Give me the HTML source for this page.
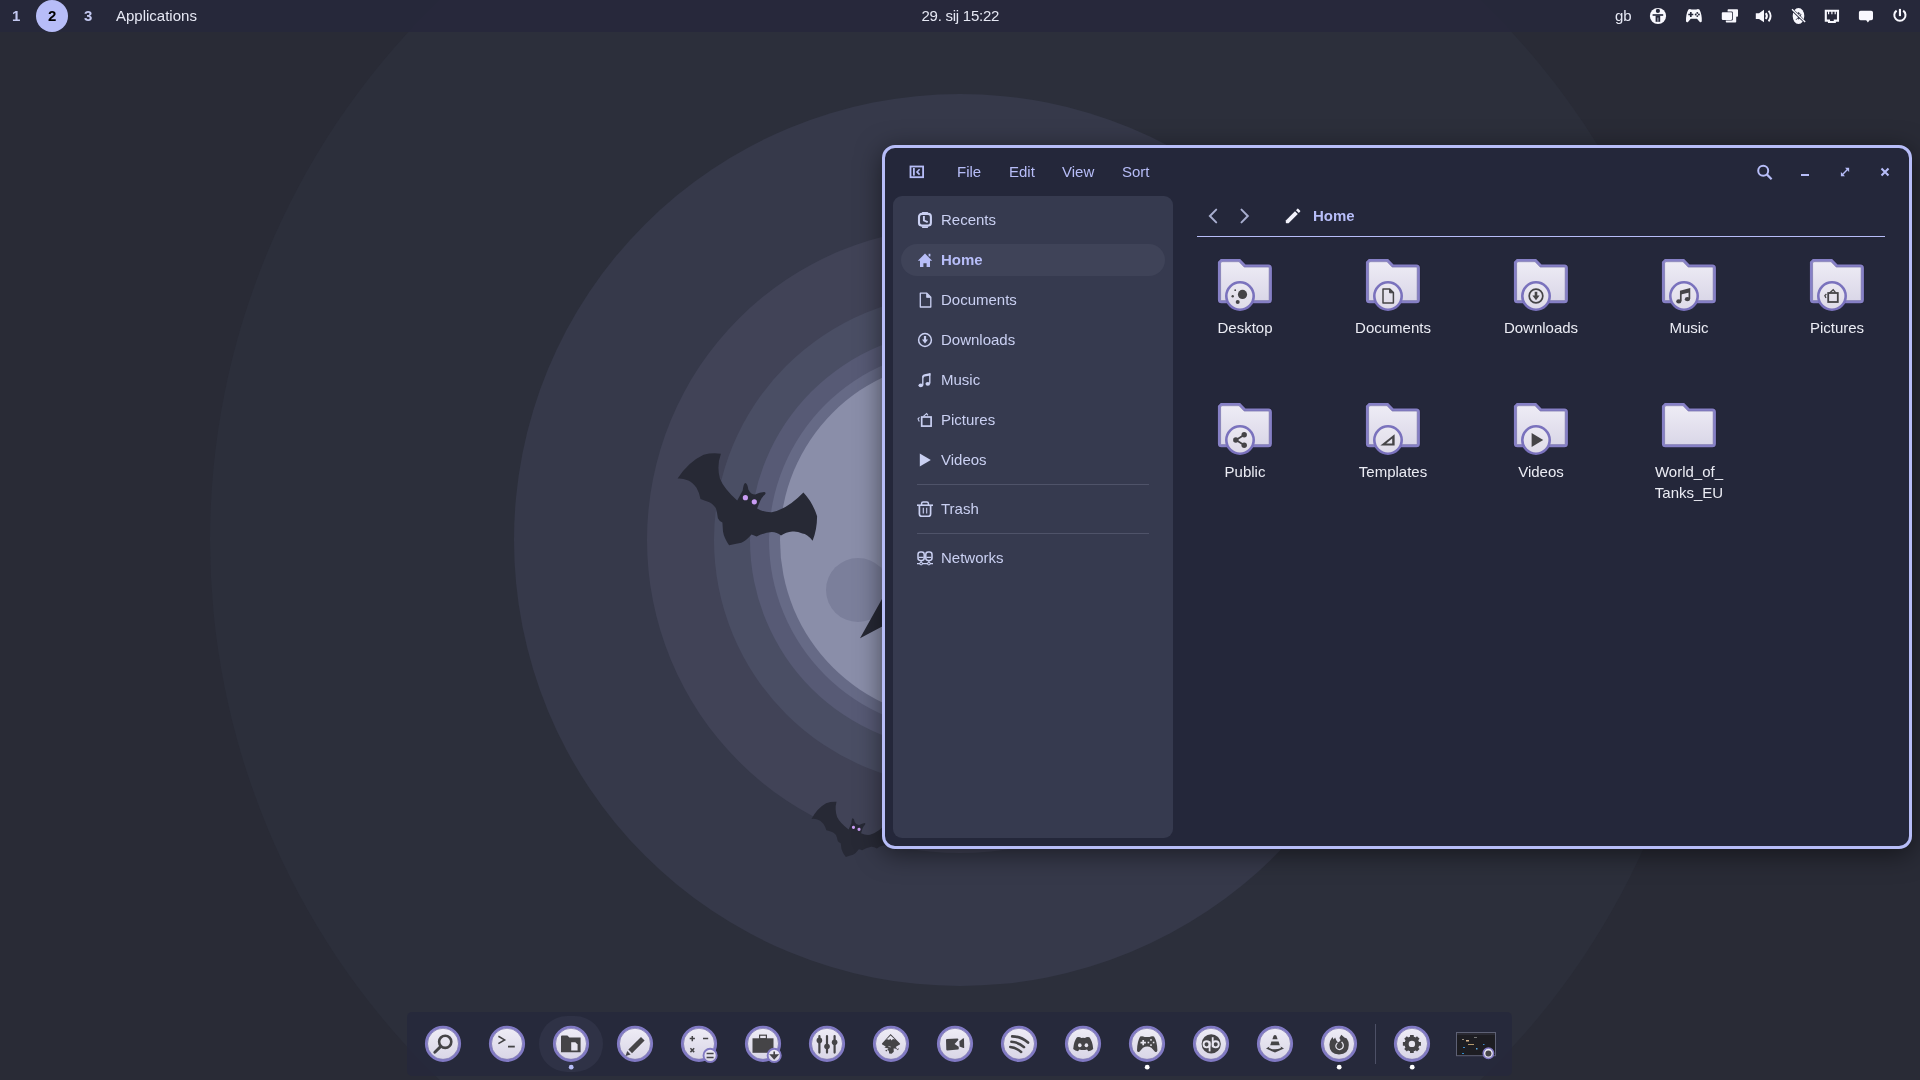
<!DOCTYPE html>
<html><head><meta charset="utf-8">
<style>
*{margin:0;padding:0;box-sizing:border-box}
html,body{width:1920px;height:1080px;overflow:hidden;background:#292b36;font-family:"Liberation Sans",sans-serif}
#root{position:absolute;left:0;top:0;width:1920px;height:1080px;will-change:transform}
.abs{position:absolute}
#wall{position:absolute;left:0;top:0}
#bar{position:absolute;left:0;top:0;width:1920px;height:32px;background:rgba(38,40,59,0.86);color:#e6e8f4;font-size:15px}
#bar .t{position:absolute;top:0;line-height:32px;white-space:nowrap}
#win{position:absolute;left:882px;top:145px;width:1030px;height:704px;border:3px solid #b7bdf8;border-radius:13px;background:#24273a;box-shadow:0 5px 26px rgba(0,0,0,0.5)}
.menu{position:absolute;top:161px;line-height:22px;font-size:15px;color:#b7bdf8}
#side{position:absolute;left:893px;top:196px;width:280px;height:642px;background:#363a4f;border-radius:9px}
.si{position:absolute;left:941px;font-size:15px;color:#cad0f2;line-height:20px;white-space:nowrap}
.sic{position:absolute;left:917px;width:16px;height:16px}
.sep{position:absolute;left:917px;width:232px;height:1px;background:#4f5369}
.lbl{position:absolute;width:148px;text-align:center;font-size:15px;color:#ebecf4;line-height:21px}
.fold{position:absolute;width:54px;height:56px}
#dock{position:absolute;left:407px;top:1012px;width:1105px;height:64px;background:rgba(37,40,60,0.8);border-radius:5px}
.di{position:absolute;top:1025px;width:38px;height:38px}
.dot{position:absolute;top:1065px;width:5px;height:5px;border-radius:50%}
</style></head>
<body><div id="root">
<svg id="wall" width="1920" height="1080" viewBox="0 0 1920 1080">
  <rect width="1920" height="1080" fill="#292b36"/>
  <circle cx="960" cy="540" r="750" fill="#2c2f3b"/>
  <circle cx="960" cy="540" r="446" fill="#36394a"/>
  <circle cx="960" cy="540" r="313" fill="#414357"/>
  <circle cx="960" cy="540" r="246" fill="#4a4e64"/>
  <circle cx="960" cy="540" r="210" fill="#575a75"/>
  <circle cx="960" cy="540" r="191" fill="#666a86"/>
  <circle cx="960" cy="540" r="180" fill="#8a8ea9"/>
  <circle cx="858" cy="590" r="32" fill="#7b7f9b"/>
  <path d="M860,638.3 L881.7,599.4 L890,590 L890,630 L881.7,626.7 Z" fill="#262834"/>
  <g id="bat1">
  <path fill="#272935" d="M677.6,478.6 Q688,462 703.6,454.7 Q712,452.5 720.9,453.7 Q716.5,466 719.9,478.6 Q724,489 737.2,500.5 L742.6,490.8 Q743.6,482.6 745.5,482.9 Q747.6,483.6 748.3,489.4 Q751,494.6 755.2,494.6 Q760,492.2 764.4,492 Q766.4,492.4 765,494.6 Q761.6,497.6 760.4,500.4 L757.1,508.6 Q764,512.5 771.8,512.2 Q787.1,509.2 803.4,492.4 Q812.6,502 817.1,516.3 Q817,530 812.6,540.7 Q807,534 802.4,533.6 Q797,531 792.2,531.6 Q786,532 781,535.6 Q777,532 771.8,532 Q763,533 756.6,536.6 Q753,535 751.5,534.6 Q746,541 741.3,542.8 Q735,544 729.1,545.3 Q724,538 723,531.6 L722.4,522.4 Q719,521 717.9,518.3 Q717,512 715.8,508.1 Q712,503 708.7,502 Q703,500 700.5,499 Q699,492 696.5,487.8 Q692,482 688.3,480.6 Q682,478 677.6,478.6 Z"/>
  <circle cx="745.4" cy="497.7" r="2.6" fill="#c99cf4"/>
  <circle cx="754.3" cy="501.8" r="2.6" fill="#c99cf4"/>
  </g>
  <use href="#bat1" transform="translate(811.5,819) rotate(-4.5) scale(0.607) translate(-677.6,-478.6)"/>
</svg>

<div id="bar">
  <div class="t" style="left:12px;font-weight:bold;color:#c3c8f0">1</div>
  <div class="abs" style="left:36px;top:0;width:32px;height:32px;border-radius:50%;background:#b7bdf8"></div>
  <div class="t" style="left:48px;font-weight:bold;color:#000">2</div>
  <div class="t" style="left:84px;font-weight:bold;color:#c3c8f0">3</div>
  <div class="t" style="left:116px">Applications</div>
  <div class="t" style="left:921.5px;letter-spacing:-0.25px">29. sij 15:22</div>
  <div class="t" style="left:1615px">gb</div>
  <svg class="abs" style="left:1640px;top:0" width="280" height="32" viewBox="1640 0 280 32"><circle cx="1658" cy="16" r="8.1" fill="#f8f8fe"/><circle cx="1657.9" cy="10.9" r="2.1" fill="#24273a"/><rect x="1652.6" y="14.2" width="10.6" height="1.6" fill="#24273a"/><rect x="1655.6" y="15.6" width="4.6" height="6.2" fill="#24273a"/><rect x="1657.3" y="17.6" width="1.2" height="4.2" fill="#9a9cab"/><path d="M1688.4,9.4 Q1690,8.6 1691.6,9.6 H1696.2 Q1697.8,8.6 1699.4,9.4 Q1702,14 1701.8,21.2 Q1701.4,22.6 1700,22.2 L1697,18.8 H1690.8 L1687.8,22.2 Q1686.4,22.6 1686,21.2 Q1685.8,14 1688.4,9.4 Z" fill="#f8f8fe"/><path d="M1690.8,12 V17 M1688.3,14.5 H1693.3" stroke="#24273a" stroke-width="1.7"/><circle cx="1697.3" cy="12.9" r="0.95" fill="#24273a"/><circle cx="1697.3" cy="16.1" r="0.95" fill="#24273a"/><circle cx="1695.7" cy="14.5" r="0.95" fill="#24273a"/><circle cx="1698.9" cy="14.5" r="0.95" fill="#24273a"/><rect x="1727.6" y="9.2" width="10.4" height="7.6" rx="0.8" fill="#f8f8fe"/><rect x="1725.8" y="16" width="10.4" height="6.6" rx="0.8" fill="#f8f8fe"/><rect x="1721" y="11.6" width="11.8" height="9" rx="1" fill="#24273a"/><rect x="1721.8" y="12.3" width="10.2" height="7.6" rx="0.8" fill="#f8f8fe"/><path d="M1755.8,13.2 H1759 L1764,9.7 V22.2 L1759,19 H1755.8 Z" fill="#f8f8fe"/><path d="M1765.8,13.2 Q1768,16.1 1765.8,19" fill="none" stroke="#f8f8fe" stroke-width="2"/><path d="M1768.6,10.8 Q1772.6,16.1 1768.6,21.4" fill="none" stroke="#f8f8fe" stroke-width="1.9"/><ellipse cx="1798.5" cy="16" rx="5.8" ry="8" fill="#f8f8fe"/><path d="M1796,11.8 L1801,16.8 L1798.6,19.2 V12.4 L1801,14.8 L1796,19.8" fill="none" stroke="#24273a" stroke-width="0.9"/><path d="M1791.6,9.2 L1805.6,22.6" stroke="#24273a" stroke-width="2.6"/><path d="M1792,9.2 L1805.2,22" stroke="#f8f8fe" stroke-width="1.3"/><path d="M1825.8,10.8 H1838 V20.6 H1834.8 V22 H1829 V20.6 H1825.8 Z" fill="none" stroke="#f8f8fe" stroke-width="2.1"/><path d="M1828.6,11 V14.2 M1831.9,11 V14.2 M1835.2,11 V14.2" stroke="#f8f8fe" stroke-width="1.2"/><path d="M1860.6,10.7 H1871.2 Q1873,10.7 1873,12.5 V18.4 Q1873,20.2 1871.2,20.2 H1869.6 L1867.9,22.6 L1866.2,20.2 H1860.6 Q1858.9,20.2 1858.9,18.4 V12.5 Q1858.9,10.7 1860.6,10.7 Z" fill="#f8f8fe"/><path d="M1896.6,10.6 A5.6,5.6 0 1 0 1903.2,10.6" fill="none" stroke="#f8f8fe" stroke-width="2"/><rect x="1898.9" y="8.9" width="2.1" height="7.2" fill="#f8f8fe"/></svg>
</div>

<div id="win"></div>
<div class="menu" style="left:957px">File</div>
<div class="menu" style="left:1009px">Edit</div>
<div class="menu" style="left:1062px">View</div>
<div class="menu" style="left:1122px">Sort</div>

<div id="side"></div>
<div class="abs" style="left:901px;top:244px;width:264px;height:32px;border-radius:16px;background:#3f4358"></div>
<div class="si" style="top:210px">Recents</div>
<div class="si" style="top:250px;font-weight:bold;color:#b7bdf8">Home</div>
<div class="si" style="top:290px">Documents</div>
<div class="si" style="top:330px">Downloads</div>
<div class="si" style="top:370px">Music</div>
<div class="si" style="top:410px">Pictures</div>
<div class="si" style="top:450px">Videos</div>
<div class="sep" style="top:484px"></div>
<div class="si" style="top:499px">Trash</div>
<div class="sep" style="top:533px"></div>
<div class="si" style="top:548px">Networks</div>

<svg class="abs" style="left:909px;top:165px" width="16" height="14" viewBox="0 0 16 14"><rect x="1.5" y="1.5" width="12.6" height="10.7" fill="none" stroke="#b7bdf8" stroke-width="1.8"/><rect x="4" y="3" width="1.8" height="7.6" fill="#b7bdf8"/><path d="M10.6,4.2 L8,6.9 L10.6,9.6" fill="none" stroke="#b7bdf8" stroke-width="1.6"/></svg>

<svg class="sic" style="top:212px" viewBox="0 0 16 16"><rect x="2" y="1.9" width="11.9" height="11.7" rx="2.8" fill="none" stroke="#cad0f2" stroke-width="2.1"/><rect x="5.1" y="0" width="5.8" height="1.6" fill="#cad0f2"/><rect x="5.1" y="14.4" width="5.8" height="1.6" fill="#cad0f2"/><path d="M6.9,4.1 V8.5 L10.7,10.2" fill="none" stroke="#cad0f2" stroke-width="1.9"/></svg>
<svg class="sic" style="top:252px" viewBox="0 0 16 16"><path d="M8,1.6 L15.2,8.7 H13 V15 H9.6 V11.2 H6.4 V15 H3 V8.7 H0.8 Z" fill="#b7bdf8"/><rect x="11.6" y="1.8" width="1.8" height="2.6" fill="#b7bdf8"/></svg>
<svg class="sic" style="top:292px" viewBox="0 0 16 16"><path d="M3.3,1.2 H9.8 L13.8,5.2 V15 H3.3 Z" fill="none" stroke="#cad0f2" stroke-width="1.3" stroke-linejoin="round"/><path d="M9.6,1.2 V5.4 H13.8" fill="#cad0f2" stroke="#cad0f2" stroke-width="0.8"/></svg>
<svg class="sic" style="top:332px" viewBox="0 0 16 16"><circle cx="8" cy="8" r="6.4" fill="none" stroke="#cad0f2" stroke-width="1.5"/><path d="M6.9,4 H9.1 V7.6 H11 L8,11.4 L5,7.6 H6.9 Z" fill="#cad0f2"/></svg>
<svg class="sic" style="top:372px" viewBox="0 0 16 16"><path d="M5.8,13 V4.2 M12.8,11.6 V1.4" stroke="#cad0f2" stroke-width="1.35"/><path d="M5.1,4.6 Q5.4,2.7 7.6,2.2 L13.45,0.9 V3.4 L7.8,4.6 Q6.4,4.9 6.45,6.4 Z" fill="#cad0f2"/><ellipse cx="3.8" cy="13.3" rx="2.3" ry="1.85" fill="#cad0f2"/><ellipse cx="10.8" cy="11.8" rx="2.3" ry="1.85" fill="#cad0f2"/></svg>
<svg class="sic" style="top:412px" viewBox="0 0 16 16"><rect x="4.7" y="5" width="9.4" height="9.1" fill="none" stroke="#cad0f2" stroke-width="1.7"/><path d="M6.4,4.4 L9.6,1.5 L10.9,3.4" fill="none" stroke="#cad0f2" stroke-width="1.15"/><path d="M2.5,5.3 L1,6.9 L2.3,9.4" fill="none" stroke="#cad0f2" stroke-width="1.1"/></svg>
<svg class="sic" style="top:452px" viewBox="0 0 16 16"><path d="M2.8,1.6 L13.8,8 L2.8,14.6 Z" fill="#cad0f2"/></svg>
<svg class="sic" style="top:501px" viewBox="0 0 16 16"><path d="M0,4.2 H16" stroke="#cad0f2" stroke-width="1.6"/><path d="M4.6,4 V2.6 Q4.6,1 6.2,1 H9.8 Q11.4,1 11.4,2.6 V4" fill="none" stroke="#cad0f2" stroke-width="1.5"/><path d="M2.4,4.6 V13 Q2.4,15.3 4.6,15.3 H11.4 Q13.6,15.3 13.6,13 V4.6" fill="none" stroke="#cad0f2" stroke-width="1.7"/><path d="M6.3,6.8 V12.4 M9.7,6.8 V12.4" stroke="#cad0f2" stroke-width="1.1"/></svg>
<svg class="sic" style="top:551px" viewBox="0 0 16 16"><rect x="1" y="1" width="6.2" height="8.4" rx="2.4" fill="none" stroke="#cad0f2" stroke-width="1.5"/><rect x="8.8" y="1" width="6.2" height="8.4" rx="2.4" fill="none" stroke="#cad0f2" stroke-width="1.5"/><path d="M1.6,6.4 H6.6 M9.4,6.4 H14.4" stroke="#cad0f2" stroke-width="1.1"/><path d="M4.1,9.4 V11.2 M11.9,9.4 V11.2 M0,12.6 H16" stroke="#cad0f2" stroke-width="1.3"/><circle cx="4.1" cy="12.6" r="1.8" fill="#cad0f2"/><circle cx="11.9" cy="12.6" r="1.8" fill="#cad0f2"/><circle cx="4.1" cy="12.6" r="0.8" fill="#363a4f"/><circle cx="11.9" cy="12.6" r="0.8" fill="#363a4f"/></svg>

<svg class="abs" style="left:1203px;top:207px" width="18" height="18" viewBox="0 0 18 18"><path d="M13.2,2.6 L6.9,9 L13.2,15.4" fill="none" stroke="#a8aecf" stroke-width="2" stroke-linecap="round"/></svg>
<svg class="abs" style="left:1236px;top:207px" width="18" height="18" viewBox="0 0 18 18"><path d="M5.5,2.6 L11.8,9 L5.5,15.4" fill="none" stroke="#a8aecf" stroke-width="2" stroke-linecap="round"/></svg>
<svg class="abs" style="left:1285px;top:208px" width="16" height="16" viewBox="0 0 16 16"><path d="M0.8,12.4 L10,3.2 L12.8,6 L3.6,15.2 H1.4 Q0.8,15.2 0.8,14.6 Z" fill="#f2f2fb"/><path d="M11,2.2 L12.4,0.8 Q12.8,0.4 13.2,0.8 L15.2,2.8 Q15.6,3.2 15.2,3.6 L13.8,5 Z" fill="#f2f2fb"/></svg>

<svg class="abs" style="left:1755px;top:163px" width="18" height="18" viewBox="0 0 18 18"><circle cx="8.2" cy="7.8" r="5" fill="none" stroke="#b7bdf8" stroke-width="2"/><path d="M11.8,11.4 L16.6,16.2" stroke="#b7bdf8" stroke-width="2.2"/></svg>
<div class="abs" style="left:1801px;top:173.5px;width:8px;height:2.5px;background:#b7bdf8"></div>
<svg class="abs" style="left:1838px;top:165px" width="14" height="14" viewBox="0 0 14 14"><path d="M4.6,9.4 L9.4,4.6" stroke="#b7bdf8" stroke-width="1.35"/><path d="M7,2.8 H11.1 V6.9 Z" fill="#b7bdf8"/><path d="M2.9,7.1 V11.2 H7 Z" fill="#b7bdf8"/></svg>
<svg class="abs" style="left:1878px;top:165px" width="14" height="14" viewBox="0 0 14 14"><path d="M3.5,3.5 L10.5,10.5 M10.5,3.5 L3.5,10.5" stroke="#b7bdf8" stroke-width="2.1"/></svg>


<div class="abs" style="left:1197px;top:236px;width:688px;height:1px;background:#b7bdf8"></div>
<div class="abs" style="left:1313px;top:205px;font-size:15px;font-weight:bold;color:#b7bdf8;line-height:22px">Home</div>

<svg width="0" height="0" style="position:absolute"><defs><linearGradient id="fg" x1="0" y1="0" x2="0" y2="1"><stop offset="0" stop-color="#efedf6"/><stop offset="1" stop-color="#d9d6e7"/></linearGradient><linearGradient id="bg" x1="0" y1="0" x2="0" y2="1"><stop offset="0" stop-color="#ebe9f2"/><stop offset="1" stop-color="#dedbe8"/></linearGradient></defs></svg><svg class="abs" style="left:1217px;top:259px" width="56" height="56" viewBox="0 0 56 56"><path d="M2.2,3.4 L4.3,1.3 H22.6 L27.8,6.7 H51.4 Q53.6,6.7 53.6,8.9 V40.8 Q53.6,43 51.4,43 H4.4 Q2.2,43 2.2,40.8 Z" fill="url(#fg)" stroke="#1f1e32" stroke-width="4" stroke-opacity="0.35"/><path d="M2.2,3.4 L4.3,1.3 H22.6 L27.8,6.7 H51.4 Q53.6,6.7 53.6,8.9 V40.8 Q53.6,43 51.4,43 H4.4 Q2.2,43 2.2,40.8 Z" fill="url(#fg)" stroke="#8680c6" stroke-width="2.6"/><path d="M3.6,4 L4.9,2.7 H22 L27.2,8.1 H51.3 Q52.2,8.1 52.2,9 V40.7 Q52.2,41.6 51.3,41.6 H4.5 Q3.6,41.6 3.6,40.7 Z" fill="none" stroke="#655e9e" stroke-width="0.7" stroke-opacity="0.8"/><circle cx="23" cy="37" r="13.7" fill="url(#bg)" stroke="#7a72bd" stroke-width="2.6"/><g transform="translate(23,37)"><circle cx="2.5" cy="-1.6" r="4.6" fill="#454447"/><circle cx="-2.3" cy="5.9" r="2" fill="#454447"/><circle cx="-7.3" cy="0.3" r="1.2" fill="#454447"/><circle cx="-4.8" cy="-5.8" r="0.9" fill="#454447"/></g></svg>
<svg class="abs" style="left:1365px;top:259px" width="56" height="56" viewBox="0 0 56 56"><path d="M2.2,3.4 L4.3,1.3 H22.6 L27.8,6.7 H51.4 Q53.6,6.7 53.6,8.9 V40.8 Q53.6,43 51.4,43 H4.4 Q2.2,43 2.2,40.8 Z" fill="url(#fg)" stroke="#1f1e32" stroke-width="4" stroke-opacity="0.35"/><path d="M2.2,3.4 L4.3,1.3 H22.6 L27.8,6.7 H51.4 Q53.6,6.7 53.6,8.9 V40.8 Q53.6,43 51.4,43 H4.4 Q2.2,43 2.2,40.8 Z" fill="url(#fg)" stroke="#8680c6" stroke-width="2.6"/><path d="M3.6,4 L4.9,2.7 H22 L27.2,8.1 H51.3 Q52.2,8.1 52.2,9 V40.7 Q52.2,41.6 51.3,41.6 H4.5 Q3.6,41.6 3.6,40.7 Z" fill="none" stroke="#655e9e" stroke-width="0.7" stroke-opacity="0.8"/><circle cx="23" cy="37" r="13.7" fill="url(#bg)" stroke="#7a72bd" stroke-width="2.6"/><g transform="translate(23,37)"><path d="M-5,-7 H1.8 L5.4,-3.4 V7 H-5 Z" fill="none" stroke="#454447" stroke-width="1.5" stroke-linejoin="round"/><path d="M1.6,-7 V-3.2 H5.4" fill="#454447" stroke="#454447" stroke-width="1"/></g></svg>
<svg class="abs" style="left:1513px;top:259px" width="56" height="56" viewBox="0 0 56 56"><path d="M2.2,3.4 L4.3,1.3 H22.6 L27.8,6.7 H51.4 Q53.6,6.7 53.6,8.9 V40.8 Q53.6,43 51.4,43 H4.4 Q2.2,43 2.2,40.8 Z" fill="url(#fg)" stroke="#1f1e32" stroke-width="4" stroke-opacity="0.35"/><path d="M2.2,3.4 L4.3,1.3 H22.6 L27.8,6.7 H51.4 Q53.6,6.7 53.6,8.9 V40.8 Q53.6,43 51.4,43 H4.4 Q2.2,43 2.2,40.8 Z" fill="url(#fg)" stroke="#8680c6" stroke-width="2.6"/><path d="M3.6,4 L4.9,2.7 H22 L27.2,8.1 H51.3 Q52.2,8.1 52.2,9 V40.7 Q52.2,41.6 51.3,41.6 H4.5 Q3.6,41.6 3.6,40.7 Z" fill="none" stroke="#655e9e" stroke-width="0.7" stroke-opacity="0.8"/><circle cx="23" cy="37" r="13.7" fill="url(#bg)" stroke="#7a72bd" stroke-width="2.6"/><g transform="translate(23,37)"><circle cx="0" cy="0" r="6.8" fill="none" stroke="#454447" stroke-width="1.7"/><path d="M-1.3,-4.2 H1.3 V-0.4 H3.6 L0,4.2 L-3.6,-0.4 H-1.3 Z" fill="#454447"/></g></svg>
<svg class="abs" style="left:1661px;top:259px" width="56" height="56" viewBox="0 0 56 56"><path d="M2.2,3.4 L4.3,1.3 H22.6 L27.8,6.7 H51.4 Q53.6,6.7 53.6,8.9 V40.8 Q53.6,43 51.4,43 H4.4 Q2.2,43 2.2,40.8 Z" fill="url(#fg)" stroke="#1f1e32" stroke-width="4" stroke-opacity="0.35"/><path d="M2.2,3.4 L4.3,1.3 H22.6 L27.8,6.7 H51.4 Q53.6,6.7 53.6,8.9 V40.8 Q53.6,43 51.4,43 H4.4 Q2.2,43 2.2,40.8 Z" fill="url(#fg)" stroke="#8680c6" stroke-width="2.6"/><path d="M3.6,4 L4.9,2.7 H22 L27.2,8.1 H51.3 Q52.2,8.1 52.2,9 V40.7 Q52.2,41.6 51.3,41.6 H4.5 Q3.6,41.6 3.6,40.7 Z" fill="none" stroke="#655e9e" stroke-width="0.7" stroke-opacity="0.8"/><circle cx="23" cy="37" r="13.7" fill="url(#bg)" stroke="#7a72bd" stroke-width="2.6"/><g transform="translate(23,37)"><path d="M-3.2,5 V-4.6 L5.4,-6.8 V3" fill="none" stroke="#454447" stroke-width="1.7"/><path d="M-3.2,-4.6 L5.4,-6.8 V-3.6 L-3.2,-1.4 Z" fill="#454447"/><ellipse cx="-5.2" cy="5.4" rx="2.6" ry="2.1" fill="#454447"/><ellipse cx="3.4" cy="3.2" rx="2.6" ry="2.1" fill="#454447"/></g></svg>
<svg class="abs" style="left:1809px;top:259px" width="56" height="56" viewBox="0 0 56 56"><path d="M2.2,3.4 L4.3,1.3 H22.6 L27.8,6.7 H51.4 Q53.6,6.7 53.6,8.9 V40.8 Q53.6,43 51.4,43 H4.4 Q2.2,43 2.2,40.8 Z" fill="url(#fg)" stroke="#1f1e32" stroke-width="4" stroke-opacity="0.35"/><path d="M2.2,3.4 L4.3,1.3 H22.6 L27.8,6.7 H51.4 Q53.6,6.7 53.6,8.9 V40.8 Q53.6,43 51.4,43 H4.4 Q2.2,43 2.2,40.8 Z" fill="url(#fg)" stroke="#8680c6" stroke-width="2.6"/><path d="M3.6,4 L4.9,2.7 H22 L27.2,8.1 H51.3 Q52.2,8.1 52.2,9 V40.7 Q52.2,41.6 51.3,41.6 H4.5 Q3.6,41.6 3.6,40.7 Z" fill="none" stroke="#655e9e" stroke-width="0.7" stroke-opacity="0.8"/><circle cx="23" cy="37" r="13.7" fill="url(#bg)" stroke="#7a72bd" stroke-width="2.6"/><g transform="translate(23,37)"><rect x="-3.8" y="-3" width="9.6" height="9" fill="none" stroke="#454447" stroke-width="1.8"/><path d="M-2.4,-3 L1.2,-6.2 L3.6,-3.4" fill="none" stroke="#454447" stroke-width="1.3"/><path d="M-5.6,-2 L-7.2,-0.4 L-6,2" fill="none" stroke="#454447" stroke-width="1.2"/></g></svg>
<svg class="abs" style="left:1217px;top:403px" width="56" height="56" viewBox="0 0 56 56"><path d="M2.2,3.4 L4.3,1.3 H22.6 L27.8,6.7 H51.4 Q53.6,6.7 53.6,8.9 V40.8 Q53.6,43 51.4,43 H4.4 Q2.2,43 2.2,40.8 Z" fill="url(#fg)" stroke="#1f1e32" stroke-width="4" stroke-opacity="0.35"/><path d="M2.2,3.4 L4.3,1.3 H22.6 L27.8,6.7 H51.4 Q53.6,6.7 53.6,8.9 V40.8 Q53.6,43 51.4,43 H4.4 Q2.2,43 2.2,40.8 Z" fill="url(#fg)" stroke="#8680c6" stroke-width="2.6"/><path d="M3.6,4 L4.9,2.7 H22 L27.2,8.1 H51.3 Q52.2,8.1 52.2,9 V40.7 Q52.2,41.6 51.3,41.6 H4.5 Q3.6,41.6 3.6,40.7 Z" fill="none" stroke="#655e9e" stroke-width="0.7" stroke-opacity="0.8"/><circle cx="23" cy="37" r="13.7" fill="url(#bg)" stroke="#7a72bd" stroke-width="2.6"/><g transform="translate(23,37)"><path d="M4,-5 L-4,0 L4,5" fill="none" stroke="#454447" stroke-width="1.8"/><circle cx="4.2" cy="-5.2" r="2.7" fill="#454447"/><circle cx="-4.2" cy="0" r="2.7" fill="#454447"/><circle cx="4.2" cy="5.2" r="2.7" fill="#454447"/></g></svg>
<svg class="abs" style="left:1365px;top:403px" width="56" height="56" viewBox="0 0 56 56"><path d="M2.2,3.4 L4.3,1.3 H22.6 L27.8,6.7 H51.4 Q53.6,6.7 53.6,8.9 V40.8 Q53.6,43 51.4,43 H4.4 Q2.2,43 2.2,40.8 Z" fill="url(#fg)" stroke="#1f1e32" stroke-width="4" stroke-opacity="0.35"/><path d="M2.2,3.4 L4.3,1.3 H22.6 L27.8,6.7 H51.4 Q53.6,6.7 53.6,8.9 V40.8 Q53.6,43 51.4,43 H4.4 Q2.2,43 2.2,40.8 Z" fill="url(#fg)" stroke="#8680c6" stroke-width="2.6"/><path d="M3.6,4 L4.9,2.7 H22 L27.2,8.1 H51.3 Q52.2,8.1 52.2,9 V40.7 Q52.2,41.6 51.3,41.6 H4.5 Q3.6,41.6 3.6,40.7 Z" fill="none" stroke="#655e9e" stroke-width="0.7" stroke-opacity="0.8"/><circle cx="23" cy="37" r="13.7" fill="url(#bg)" stroke="#7a72bd" stroke-width="2.6"/><g transform="translate(23,37)"><path d="M-7.6,5.6 L6.6,-5.8 V5.6 Z" fill="#454447"/><path d="M-1.8,3.4 L4.2,-1.4 V3.4 Z" fill="#e6e4ee"/></g></svg>
<svg class="abs" style="left:1513px;top:403px" width="56" height="56" viewBox="0 0 56 56"><path d="M2.2,3.4 L4.3,1.3 H22.6 L27.8,6.7 H51.4 Q53.6,6.7 53.6,8.9 V40.8 Q53.6,43 51.4,43 H4.4 Q2.2,43 2.2,40.8 Z" fill="url(#fg)" stroke="#1f1e32" stroke-width="4" stroke-opacity="0.35"/><path d="M2.2,3.4 L4.3,1.3 H22.6 L27.8,6.7 H51.4 Q53.6,6.7 53.6,8.9 V40.8 Q53.6,43 51.4,43 H4.4 Q2.2,43 2.2,40.8 Z" fill="url(#fg)" stroke="#8680c6" stroke-width="2.6"/><path d="M3.6,4 L4.9,2.7 H22 L27.2,8.1 H51.3 Q52.2,8.1 52.2,9 V40.7 Q52.2,41.6 51.3,41.6 H4.5 Q3.6,41.6 3.6,40.7 Z" fill="none" stroke="#655e9e" stroke-width="0.7" stroke-opacity="0.8"/><circle cx="23" cy="37" r="13.7" fill="url(#bg)" stroke="#7a72bd" stroke-width="2.6"/><g transform="translate(23,37)"><path d="M-4.4,-7 L7.2,0 L-4.4,7 Z" fill="#454447"/></g></svg>
<svg class="abs" style="left:1661px;top:403px" width="56" height="56" viewBox="0 0 56 56"><path d="M2.2,3.4 L4.3,1.3 H22.6 L27.8,6.7 H51.4 Q53.6,6.7 53.6,8.9 V40.8 Q53.6,43 51.4,43 H4.4 Q2.2,43 2.2,40.8 Z" fill="url(#fg)" stroke="#1f1e32" stroke-width="4" stroke-opacity="0.35"/><path d="M2.2,3.4 L4.3,1.3 H22.6 L27.8,6.7 H51.4 Q53.6,6.7 53.6,8.9 V40.8 Q53.6,43 51.4,43 H4.4 Q2.2,43 2.2,40.8 Z" fill="url(#fg)" stroke="#8680c6" stroke-width="2.6"/><path d="M3.6,4 L4.9,2.7 H22 L27.2,8.1 H51.3 Q52.2,8.1 52.2,9 V40.7 Q52.2,41.6 51.3,41.6 H4.5 Q3.6,41.6 3.6,40.7 Z" fill="none" stroke="#655e9e" stroke-width="0.7" stroke-opacity="0.8"/></svg>
<div class="lbl" style="left:1171px;top:317px">Desktop</div>
<div class="lbl" style="left:1319px;top:317px">Documents</div>
<div class="lbl" style="left:1467px;top:317px">Downloads</div>
<div class="lbl" style="left:1615px;top:317px">Music</div>
<div class="lbl" style="left:1763px;top:317px">Pictures</div>
<div class="lbl" style="left:1171px;top:461px">Public</div>
<div class="lbl" style="left:1319px;top:461px">Templates</div>
<div class="lbl" style="left:1467px;top:461px">Videos</div>
<div class="lbl" style="left:1615px;top:461px">World_of_<br>Tanks_EU</div>

<div id="dock"></div>
<svg class="abs" style="left:407px;top:1012px" width="1105" height="64" viewBox="407 1012 1105 64"><defs><linearGradient id="dg" x1="0" y1="0" x2="0" y2="1"><stop offset="0" stop-color="#efedf6"/><stop offset="1" stop-color="#d8d5e6"/></linearGradient></defs><rect x="539" y="1016" width="64" height="56" rx="28" fill="#2f3246"/><circle cx="443" cy="1043.8" r="16.8" fill="url(#dg)" stroke="#8079c3" stroke-width="2.6"/><circle cx="443" cy="1043.8" r="15.5" fill="none" stroke="#6a63a6" stroke-width="0.7" stroke-opacity="0.85"/><circle cx="507" cy="1043.8" r="16.8" fill="url(#dg)" stroke="#8079c3" stroke-width="2.6"/><circle cx="507" cy="1043.8" r="15.5" fill="none" stroke="#6a63a6" stroke-width="0.7" stroke-opacity="0.85"/><circle cx="571" cy="1043.8" r="16.8" fill="url(#dg)" stroke="#8079c3" stroke-width="2.6"/><circle cx="571" cy="1043.8" r="15.5" fill="none" stroke="#6a63a6" stroke-width="0.7" stroke-opacity="0.85"/><circle cx="635" cy="1043.8" r="16.8" fill="url(#dg)" stroke="#8079c3" stroke-width="2.6"/><circle cx="635" cy="1043.8" r="15.5" fill="none" stroke="#6a63a6" stroke-width="0.7" stroke-opacity="0.85"/><circle cx="699" cy="1043.8" r="16.8" fill="url(#dg)" stroke="#8079c3" stroke-width="2.6"/><circle cx="699" cy="1043.8" r="15.5" fill="none" stroke="#6a63a6" stroke-width="0.7" stroke-opacity="0.85"/><circle cx="763" cy="1043.8" r="16.8" fill="url(#dg)" stroke="#8079c3" stroke-width="2.6"/><circle cx="763" cy="1043.8" r="15.5" fill="none" stroke="#6a63a6" stroke-width="0.7" stroke-opacity="0.85"/><circle cx="827" cy="1043.8" r="16.8" fill="url(#dg)" stroke="#8079c3" stroke-width="2.6"/><circle cx="827" cy="1043.8" r="15.5" fill="none" stroke="#6a63a6" stroke-width="0.7" stroke-opacity="0.85"/><circle cx="891" cy="1043.8" r="16.8" fill="url(#dg)" stroke="#8079c3" stroke-width="2.6"/><circle cx="891" cy="1043.8" r="15.5" fill="none" stroke="#6a63a6" stroke-width="0.7" stroke-opacity="0.85"/><circle cx="955" cy="1043.8" r="16.8" fill="url(#dg)" stroke="#8079c3" stroke-width="2.6"/><circle cx="955" cy="1043.8" r="15.5" fill="none" stroke="#6a63a6" stroke-width="0.7" stroke-opacity="0.85"/><circle cx="1019" cy="1043.8" r="16.8" fill="url(#dg)" stroke="#8079c3" stroke-width="2.6"/><circle cx="1019" cy="1043.8" r="15.5" fill="none" stroke="#6a63a6" stroke-width="0.7" stroke-opacity="0.85"/><circle cx="1083" cy="1043.8" r="16.8" fill="url(#dg)" stroke="#8079c3" stroke-width="2.6"/><circle cx="1083" cy="1043.8" r="15.5" fill="none" stroke="#6a63a6" stroke-width="0.7" stroke-opacity="0.85"/><circle cx="1147" cy="1043.8" r="16.8" fill="url(#dg)" stroke="#8079c3" stroke-width="2.6"/><circle cx="1147" cy="1043.8" r="15.5" fill="none" stroke="#6a63a6" stroke-width="0.7" stroke-opacity="0.85"/><circle cx="1211" cy="1043.8" r="16.8" fill="url(#dg)" stroke="#8079c3" stroke-width="2.6"/><circle cx="1211" cy="1043.8" r="15.5" fill="none" stroke="#6a63a6" stroke-width="0.7" stroke-opacity="0.85"/><circle cx="1275" cy="1043.8" r="16.8" fill="url(#dg)" stroke="#8079c3" stroke-width="2.6"/><circle cx="1275" cy="1043.8" r="15.5" fill="none" stroke="#6a63a6" stroke-width="0.7" stroke-opacity="0.85"/><circle cx="1339" cy="1043.8" r="16.8" fill="url(#dg)" stroke="#8079c3" stroke-width="2.6"/><circle cx="1339" cy="1043.8" r="15.5" fill="none" stroke="#6a63a6" stroke-width="0.7" stroke-opacity="0.85"/><circle cx="1412" cy="1043.8" r="16.8" fill="url(#dg)" stroke="#8079c3" stroke-width="2.6"/><circle cx="1412" cy="1043.8" r="15.5" fill="none" stroke="#6a63a6" stroke-width="0.7" stroke-opacity="0.85"/><circle cx="445.2" cy="1041.8" r="6.1" fill="none" stroke="#454447" stroke-width="2.6"/><path d="M440.8,1046.4 L434.8,1052.2" stroke="#454447" stroke-width="2.9" stroke-linecap="round"/><path d="M498.4,1036.2 L504.6,1039.9 L498.4,1043.6" fill="none" stroke="#454447" stroke-width="1.6"/><path d="M508,1046.6 H514.8" stroke="#454447" stroke-width="1.8"/><path d="M561,1036.6 Q561,1035.5 562,1035.5 H567.4 L569.4,1037.6 H580.6 V1052.2 H561 Z" fill="#454447"/><path d="M571.2,1042.2 H575.4 L577.6,1044.4 V1050.4 H571.2 Z" fill="#e8e6f0"/><path d="M628.4,1049.6 L641,1037 L644.6,1040.6 L632,1053.2 Z" fill="#454447"/><path d="M627.2,1051 L630.6,1054.4 L625.6,1056 Z" fill="#454447"/><path d="M692.3,1036 V1041.2 M689.7,1038.6 H694.9 M703,1038.6 H708.2 M690.4,1048.3 L694.2,1052.1 M694.2,1048.3 L690.4,1052.1" stroke="#454447" stroke-width="1.5"/><circle cx="710.1" cy="1055.4" r="6.6" fill="url(#dg)" stroke="#8179c2" stroke-width="1.9"/><path d="M706.6,1053.6 H713.6 M706.6,1057.4 H713.6" stroke="#454447" stroke-width="1.5"/><rect x="752.5" y="1038.3" width="21" height="14.5" fill="#454447"/><rect x="759.6" y="1035.2" width="6.8" height="3.6" fill="none" stroke="#454447" stroke-width="1.2"/><circle cx="774.2" cy="1055.4" r="6.6" fill="url(#dg)" stroke="#8179c2" stroke-width="1.9"/><path d="M774.2,1051.6 V1056 M771,1055 L774.2,1058.6 L777.4,1055 Z" stroke="#454447" stroke-width="1.6" fill="#454447"/><path d="M819.4,1036 V1052.6 M827,1036 V1052.6 M834.6,1036 V1052.6" stroke="#454447" stroke-width="2.2" stroke-linecap="round"/><circle cx="819.4" cy="1040.4" r="2.8" fill="#454447"/><circle cx="827" cy="1046.5" r="2.8" fill="#454447"/><circle cx="834.6" cy="1042.3" r="2.8" fill="#454447"/><path d="M890.6,1034.1 L900,1043.6 Q900.4,1044.2 899.8,1044.6 L895.6,1047 L897.2,1048.4 Q896.4,1049.2 895,1048.6 L893.6,1048.4 L893.8,1051.8 L891.6,1053.8 L889.2,1053.6 L888.8,1050.8 L887.2,1050 L888.4,1048.6 L884.4,1047.6 L885.8,1046.4 L882.2,1044.4 Q881.6,1043.8 882.2,1043.2 Z" fill="#454447"/><path d="M890.6,1035.5 L895,1039.5 L893,1039.1 L891.4,1040.5 L890.3,1038.7 L889,1040 L887.7,1039.3 L886.2,1039.8 Z" fill="#e8e6f0"/><circle cx="886.3" cy="1050.6" r="0.8" fill="#454447"/><path d="M896.8,1049.6 Q898.6,1050.2 898.4,1048.4" fill="none" stroke="#454447" stroke-width="0.8"/><path d="M888.4,1046.4 L890.8,1047" stroke="#e8e6f0" stroke-width="0.6"/><path d="M946,1040.2 Q946,1039.2 947,1039.1 L957.4,1038.4 Q958.2,1038.4 958.3,1039.2 L958.3,1040 L954.6,1044 L958.7,1046.8 L958.8,1048.6 Q958.8,1049.4 958,1049.5 L947.4,1050.6 Q946.4,1050.7 946.3,1049.8 Z" fill="#454447"/><path d="M959.4,1041.2 L963.2,1038.2 Q963.9,1038 964,1038.8 L964.2,1047.4 Q964.2,1048.2 963.4,1048 L959.6,1046.6 Z" fill="#454447"/><path d="M1012.2,1036.4 Q1021,1036.4 1028,1042.6" fill="none" stroke="#454447" stroke-width="2.7" stroke-linecap="round"/><path d="M1011.4,1041.8 Q1019,1042.2 1024,1047.2" fill="none" stroke="#454447" stroke-width="2.6" stroke-linecap="round"/><path d="M1010.2,1047 Q1016.6,1047.8 1021.2,1052" fill="none" stroke="#454447" stroke-width="2.4" stroke-linecap="round"/><path d="M1077,1037.2 Q1080,1036.6 1081.2,1038 Q1083,1037.6 1085,1038 Q1086.4,1036.6 1089.4,1037.2 Q1092.6,1041 1093.2,1049 Q1091.2,1050.8 1088.4,1051.2 L1087,1049.4 Q1083,1050.4 1079.4,1049.4 L1078,1051.2 Q1075.2,1050.8 1073.2,1049 Q1073.8,1041 1077,1037.2 Z" fill="#454447"/><ellipse cx="1079.8" cy="1045.2" rx="1.8" ry="2" fill="#e8e6f0"/><ellipse cx="1086.4" cy="1045.2" rx="1.8" ry="2" fill="#e8e6f0"/><path d="M1140.2,1036.6 Q1142.4,1035.6 1144.6,1037 H1149.6 Q1151.8,1035.6 1154,1036.6 Q1157.2,1041.4 1157.4,1050.4 Q1157,1052.6 1155,1051.8 L1151.4,1047.8 Q1147.2,1045 1143,1047.8 L1139.4,1051.8 Q1137.4,1052.6 1137,1050.4 Q1137.2,1041.4 1140.2,1036.6 Z" fill="#454447"/><path d="M1143.2,1039.9 V1045.3 M1140.5,1042.6 H1145.9" stroke="#e8e6f0" stroke-width="1.7"/><rect x="1150.2" y="1039.1" width="1.6" height="1.6" fill="#e8e6f0"/><rect x="1150.2" y="1044.3" width="1.6" height="1.6" fill="#e8e6f0"/><rect x="1147.6" y="1041.7" width="1.6" height="1.6" fill="#e8e6f0"/><rect x="1152.8" y="1041.7" width="1.6" height="1.6" fill="#e8e6f0"/><circle cx="1211.2" cy="1043.9" r="9.6" fill="#454447"/><circle cx="1206.6" cy="1044.3" r="3.05" fill="none" stroke="#e8e6f0" stroke-width="1.9"/><path d="M1209.6,1041.4 V1051.4" stroke="#e8e6f0" stroke-width="1.8"/><circle cx="1215.7" cy="1044.3" r="3.05" fill="none" stroke="#e8e6f0" stroke-width="1.9"/><path d="M1212.7,1037.2 V1047.2" stroke="#e8e6f0" stroke-width="1.8"/><path d="M1273.6,1035.8 Q1275,1034.4 1276.4,1035.8 L1277.6,1039.2 H1272.4 Z" fill="#454447"/><path d="M1271.4,1041.6 H1278.6 L1279.8,1045.2 H1270.2 Z" fill="#454447"/><path d="M1269.4,1046.4 L1266,1048.6 L1275,1052.6 L1284,1048.6 L1280.6,1046.4 L1281,1048 Q1275,1050.6 1269,1048 Z" fill="#454447"/><path d="M1332.4,1037 L1333.6,1039.4 L1335.1,1037.4 L1336.4,1040.6 Q1337.6,1041.4 1337.6,1042.6 L1339,1042 L1340.6,1040.2 L1339.4,1038 L1341.3,1034.7 L1344.4,1037.6 L1346.8,1038.6 Q1349,1041.8 1348.8,1045 Q1348.6,1054.4 1339,1054.4 Q1329.4,1054.2 1329.4,1044.8 Q1329.6,1040.6 1332.4,1037 Z" fill="#454447"/><path d="M1337.4,1042.8 Q1334.6,1045.8 1336.8,1048.4 Q1339.4,1050.6 1342,1048.6 Q1344.2,1046.4 1342.8,1043.6 L1341.6,1041.8" fill="none" stroke="#e8e6f0" stroke-width="1.2"/><path d="M1409.95,1037.59 L1410.07,1034.88 L1413.73,1034.88 L1413.85,1037.59 L1414.98,1038.06 L1416.98,1036.23 L1419.57,1038.82 L1417.74,1040.82 L1418.21,1041.95 L1420.92,1042.07 L1420.92,1045.73 L1418.21,1045.85 L1417.74,1046.98 L1419.57,1048.98 L1416.98,1051.57 L1414.98,1049.74 L1413.85,1050.21 L1413.73,1052.92 L1410.07,1052.92 L1409.95,1050.21 L1408.82,1049.74 L1406.82,1051.57 L1404.23,1048.98 L1406.06,1046.98 L1405.59,1045.85 L1402.88,1045.73 L1402.88,1042.07 L1405.59,1041.95 L1406.06,1040.82 L1404.23,1038.82 L1406.82,1036.23 L1408.82,1038.06 Z" fill="#454447"/><circle cx="1411.9" cy="1043.9" r="7.4" fill="#454447"/><circle cx="1411.9" cy="1043.9" r="3.2" fill="#e8e6f0"/><rect x="1375" y="1024" width="1" height="40" fill="#4d5066"/><rect x="1456.5" y="1032.5" width="39" height="23.2" fill="#1d1d22" stroke="#5e6175" stroke-width="1"/><rect x="1457" y="1033" width="38" height="2" fill="#2a2a33"/><rect x="1462" y="1039" width="2" height="1" fill="#9a8f7f"/><rect x="1466" y="1040" width="3" height="1.5" fill="#d8b48a"/><rect x="1468" y="1044" width="6" height="1" fill="#b59a6d"/><rect x="1463" y="1047" width="2" height="1" fill="#3d8bc9"/><rect x="1476" y="1048" width="1.5" height="1.5" fill="#59a8e0"/><rect x="1462" y="1053" width="2" height="1" fill="#2f88c9"/><rect x="1474" y="1037" width="3" height="1" fill="#777"/><rect x="1483" y="1044" width="1.5" height="1" fill="#3d8bc9"/><circle cx="1488.4" cy="1053.3" r="5.2" fill="url(#dg)" stroke="#8179c2" stroke-width="1.5"/><circle cx="1488.4" cy="1053.6" r="3" fill="#454447"/><circle cx="571.2" cy="1067.2" r="2.4" fill="#b7bdf8"/><circle cx="1147.2" cy="1067.2" r="2.4" fill="#fff"/><circle cx="1339.2" cy="1067.2" r="2.4" fill="#fff"/><circle cx="1412.2" cy="1067.2" r="2.4" fill="#fff"/></svg>
</div></body></html>
